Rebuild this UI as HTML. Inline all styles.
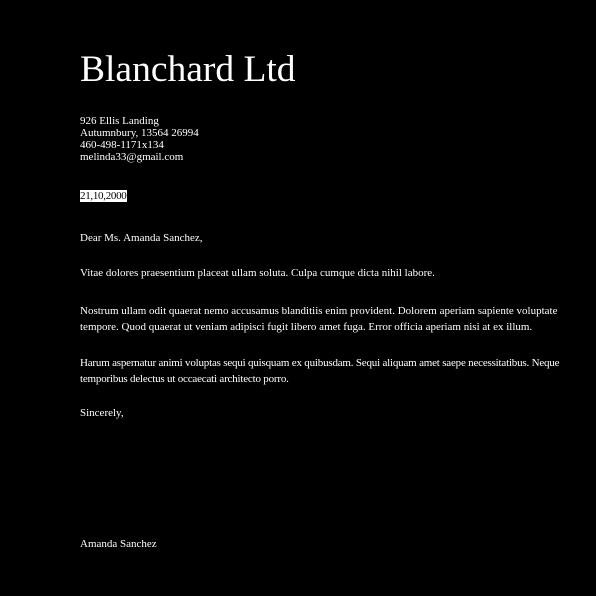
<!DOCTYPE html>
<html><head><style>
body{margin:0;background:#000;width:596px;height:596px;overflow:hidden;font-family:"Liberation Serif",serif;color:#fff;}
.w{position:absolute;left:80px;width:486px;font-size:11px;}
h1{position:absolute;left:80px;top:50px;margin:0;font-weight:normal;font-size:37.5px;line-height:40px;}
p{margin:0;}
</style></head><body>
<h1>Blanchard Ltd</h1>
<div class="w" style="top:115px;line-height:12px">926 Ellis Landing<br>Autumnbury, 13564 26994<br>460-498-1171x134<br>melinda33@gmail.com</div>
<div class="w" style="top:190px;line-height:13px"><span style="background:#fff;color:#000;letter-spacing:-0.3px">21,10,2000</span></div>
<div class="w" style="top:231px;line-height:15px">Dear Ms. Amanda Sanchez,</div>
<div class="w" style="top:266px;line-height:15px">Vitae dolores praesentium placeat ullam soluta. Culpa cumque dicta nihil labore.</div>
<div class="w" style="top:303px;line-height:16px;width:480px">Nostrum ullam odit quaerat nemo accusamus blanditiis enim provident. Dolorem aperiam sapiente voluptate tempore. Quod quaerat ut veniam adipisci fugit libero amet fuga. Error officia aperiam nisi at ex illum.</div>
<div class="w" style="top:355px;line-height:16px;width:485px;letter-spacing:-0.2px">Harum aspernatur animi voluptas sequi quisquam ex quibusdam. Sequi aliquam amet saepe necessitatibus. Neque temporibus delectus ut occaecati architecto porro.</div>
<div class="w" style="top:406px;line-height:15px">Sincerely,</div>
<div class="w" style="top:537px;line-height:15px">Amanda Sanchez</div>
</body></html>
